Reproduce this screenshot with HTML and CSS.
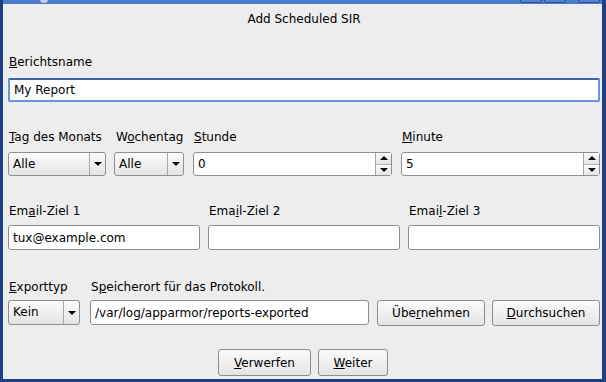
FILE: index.html
```html
<!DOCTYPE html>
<html lang="en">
<head>
  <meta charset="UTF-8">
  <title>Add Scheduled SIR</title>
  <link rel="stylesheet" href="styles.css">
</head>
<body>

  <div class="window">
    <div class="titlebar">
      <span class="app-icon"></span>
      <div class="wm-buttons">
        <span class="wm-btn"></span>
        <span class="wm-btn"></span>
        <span class="wm-btn wm-close"></span>
      </div>
    </div>

    <div class="dialog">
      <div class="dialog-title">Add Scheduled SIR</div>

      <div class="field name-row">
        <label><u>B</u>erichtsname</label>
        <input type="text" class="focused" value="My Report">
      </div>

      <div class="grid time-row">
        <label><u>T</u>ag des Monats</label>
        <label>W<u>o</u>chentag</label>
        <label><u>S</u>tunde</label>
        <label><u>M</u>inute</label>

        <div class="combo"><span class="combo-text">Alle</span><span class="combo-btn"><i class="down"></i></span></div>
        <div class="combo"><span class="combo-text">Alle</span><span class="combo-btn"><i class="down"></i></span></div>
        <div class="spin"><span class="spin-text">0</span><span class="spin-btns"><span><i class="up"></i></span><span><i class="down"></i></span></span></div>
        <div class="spin"><span class="spin-text">5</span><span class="spin-btns"><span><i class="up"></i></span><span><i class="down"></i></span></span></div>
      </div>

      <div class="grid mail-row">
        <label>Em<u>a</u>il-Ziel 1</label>
        <label>Ema<u>i</u>l-Ziel 2</label>
        <label>Emai<u>l</u>-Ziel 3</label>

        <input type="text" value="tux@example.com">
        <input type="text" value="">
        <input type="text" value="">
      </div>

      <div class="grid export-row">
        <label><u>E</u>xporttyp</label>
        <label class="wide">S<u>p</u>eicherort für das Protokoll.</label>

        <div class="combo"><span class="combo-text">Kein</span><span class="combo-btn"><i class="down"></i></span></div>
        <input type="text" class="path" value="/var/log/apparmor/reports-exported">
        <button class="btn-apply">Übe<u>r</u>nehmen</button>
        <button class="btn-browse"><u>D</u>urchsuchen</button>
      </div>

      <div class="actions">
        <button class="btn-discard"><u>V</u>erwerfen</button>
        <button class="btn-next"><u>W</u>eiter</button>
      </div>
    </div>
  </div>

</body>
</html>
```

FILE: styles.css
```css
body {
  margin: 0;
  padding: 0;
  font-family: "DejaVu Sans", Verdana, sans-serif;
  font-size: 12px;
  color: #000;
  background: #ededed;
}
.window {
  width: 606px;
  height: 382px;
  box-sizing: border-box;
  background: #ededed;
  border-left: 3px solid #1f3f86;
  border-right: 4px solid #1f3f86;
  border-bottom: 3px solid #1f3f86;
  position: relative;
  overflow: hidden;
}
.titlebar {
  height: 4px;
  background: #4b7acb;
  position: relative;
}
.app-icon {
  position: absolute;
  left: 37px;
  top: -4px;
  width: 8px;
  height: 7px;
  border-radius: 50%;
  background: #c9ccd3;
}
.wm-buttons {
  position: absolute;
  right: 2px;
  top: -6px;
  display: flex;
  gap: 2px;
}
.wm-btn {
  width: 20px;
  height: 7px;
  border: 1px solid #2c4f97;
  border-radius: 2px;
  background: #5483d2;
}
.wm-close {
  margin-left: 10px;
}
.dialog {
  padding: 0 2px 0 5px;
}
.dialog-title {
  text-align: center;
  line-height: 14px;
  padding-top: 8px;
}
label {
  display: block;
  line-height: 14px;
  padding-left: 1px;
  white-space: nowrap;
}
input {
  display: block;
  box-sizing: border-box;
  width: 100%;
  height: 25px;
  margin: 0;
  padding: 0 4px;
  font-family: "DejaVu Sans", Verdana, sans-serif;
  font-size: 12px;
  color: #000;
  background: #fff;
  border: 1px solid #8e8e8e;
  border-radius: 3px;
  outline: none;
}
input.focused {
  height: 24px;
  border: 2px solid #6596dc;
  border-top-color: #3c63a6;
  border-radius: 2px;
  padding-left: 4px;
}
.name-row {
  margin-top: 29px;
}
.name-row label {
  margin-bottom: 9px;
}
.grid {
  display: grid;
}
.time-row {
  margin-top: 28px;
  grid-template-columns: 98px 69px 199px 199px;
  column-gap: 9px;
  row-gap: 8px;
}
.time-row .combo:nth-of-type(2) {
  margin-left: -1px;
}
.mail-row {
  margin-top: 28px;
  grid-template-columns: 1fr 1fr 1fr;
  column-gap: 8px;
  row-gap: 7px;
}
.export-row {
  margin-top: 30px;
  grid-template-columns: 72px 289px 116px 115px;
  row-gap: 6px;
}
.export-row .wide {
  grid-column: 2 / 5;
  margin-left: 10px;
}
.export-row .path {
  width: 279px;
  justify-self: end;
}
.btn-apply, .btn-browse {
  width: 108px;
  justify-self: end;
}
.combo {
  display: flex;
  height: 24px;
  box-sizing: border-box;
  border: 1px solid #8e8e8e;
  border-radius: 3px;
  background: linear-gradient(#fbfbfb, #e4e4e4);
}
.export-row .combo {
  height: 25px;
}
.combo-text {
  flex: 1;
  padding-left: 4px;
  line-height: 22px;
}
.combo-btn {
  width: 15px;
  border-left: 1px solid #a8a8a8;
  display: flex;
  align-items: center;
  justify-content: center;
}
i.down, i.up {
  display: block;
  width: 0;
  height: 0;
  border-left: 4px solid transparent;
  border-right: 4px solid transparent;
}
i.down {
  border-top: 4px solid #000;
}
i.up {
  border-bottom: 4px solid #000;
}
.spin {
  display: flex;
  height: 24px;
  box-sizing: border-box;
  border: 1px solid #8e8e8e;
  border-radius: 3px;
  background: #fff;
}
.spin-text {
  flex: 1;
  padding-left: 4px;
  line-height: 22px;
}
.spin-btns {
  width: 15px;
  display: flex;
  flex-direction: column;
  border-left: 1px solid #a8a8a8;
}
.spin-btns span {
  flex: 1;
  display: flex;
  align-items: center;
  justify-content: center;
  background: linear-gradient(#fbfbfb, #e6e6e6);
}
.spin-btns span + span {
  border-top: 1px solid #b4b4b4;
}
button {
  box-sizing: border-box;
  height: 26px;
  margin: 0;
  padding: 0 10px;
  font-family: "DejaVu Sans", Verdana, sans-serif;
  font-size: 12px;
  color: #000;
  border: 1px solid #8e8e8e;
  border-radius: 3px;
  background: linear-gradient(#fbfbfb, #e4e4e4);
}
.actions {
  display: flex;
  justify-content: center;
  gap: 7px;
  margin-top: 23px;
  padding-right: 2px;
}
.actions button {
  height: 27px;
}
.btn-discard {
  width: 93px;
}
.btn-next {
  width: 70px;
}
```
